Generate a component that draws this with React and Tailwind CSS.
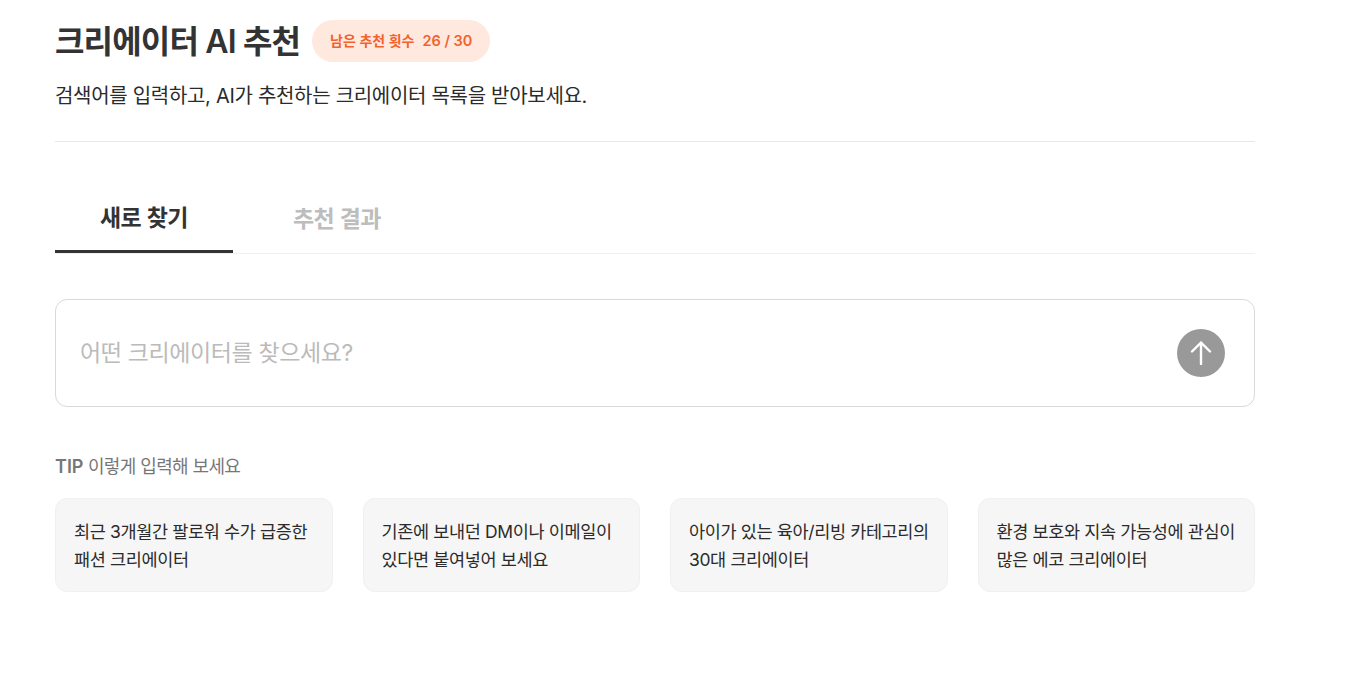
const tips = [
  ["최근 3개월간 팔로워 수가 급증한", "패션 크리에이터"],
  ["기존에 보내던 DM이나 이메일이", "있다면 붙여넣어 보세요"],
  ["아이가 있는 육아/리빙 카테고리의", "30대 크리에이터"],
  ["환경 보호와 지속 가능성에 관심이", "많은 에코 크리에이터"],
];

export default function App() {
  return (
    <div className="min-h-[684px] bg-white font-['Inter','Noto_Sans_CJK_KR',sans-serif] text-[#333] overflow-hidden">
      <div className="w-[1200px] ml-[55px]">
        <div className="flex items-center gap-3 pt-5">
          <h1 className="h-[42px] text-[32px] leading-[44px] font-semibold tracking-[-0.84px]">크리에이터 AI 추천</h1>
          <div className="h-[42px] w-[178px] pl-[18px] rounded-full bg-[#ffe9df] text-[#f2622e] text-sm font-semibold flex items-center gap-2">
            <span>남은 추천 횟수</span>
            <span className="text-[14.5px]">26 / 30</span>
          </div>
        </div>
        <p className="mt-[19px] text-[20px] leading-[30px] tracking-[-0.3px] text-[#2b2b2b]">
          검색어를 입력하고, AI가 추천하는 크리에이터 목록을 받아보세요.
        </p>
        <div className="mt-[30px] border-b border-[#e8e8e8]" />

        <div className="mt-[42px] flex border-b border-[#f0f0f0]">
          <div className="w-[178px] h-[69px] border-b-[3px] border-[#333] -mb-px flex items-center justify-center text-[23px] font-semibold tracking-[-0.46px] pt-[2px]">
            새로 찾기
          </div>
          <div className="w-[208px] h-[69px] flex items-center justify-center text-[23px] font-semibold tracking-[-0.46px] text-[#bdbdbd] pt-[2px]">
            추천 결과
          </div>
        </div>

        <div className="mt-[45px] h-[108px] rounded-xl border border-[#d9d9d9] flex items-center justify-between pl-6 pr-[29px]">
          <span className="text-[23px] tracking-[-0.38px] text-[#bbb]">어떤 크리에이터를 찾으세요?</span>
          <button className="w-12 h-12 rounded-full bg-[#999] flex items-center justify-center">
            <svg width="24" height="24" viewBox="0 0 24 24" fill="none" stroke="white" strokeWidth="2.4" strokeLinecap="round" strokeLinejoin="round">
              <path d="M12 1.5V23M3 10.5l9-9 9 9" />
            </svg>
          </button>
        </div>

        <div className="mt-[48px] text-[18px] leading-6 tracking-[-0.62px] text-[#777]">
          <span className="font-semibold tracking-normal">TIP</span> 이렇게 입력해 보세요
        </div>

        <div className="mt-[19px] grid grid-cols-4 gap-[30px]">
          {tips.map((t) => (
            <div key={t[0]} className="h-[94px] rounded-xl border border-[#f0f0f0] bg-[#f6f6f6] px-[18px] py-[19px] text-[17.5px] leading-7 tracking-[-0.37px] text-[#2b2b2b] whitespace-nowrap">
              <div>{t[0]}</div>
              <div>{t[1]}</div>
            </div>
          ))}
        </div>
      </div>
    </div>
  );
}
